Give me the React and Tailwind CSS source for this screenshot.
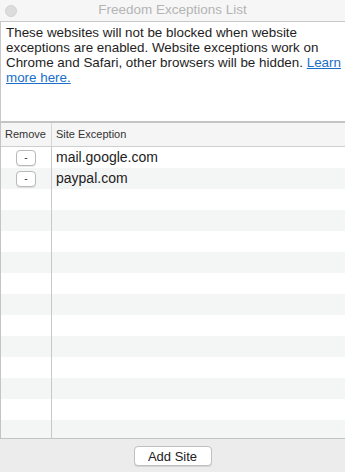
import React from 'react';

const sites = ['mail.google.com', 'paypal.com'];

function App() {
  const rows = Array.from({ length: 14 }, (_, i) => sites[i] || null);

  return (
    <div className="w-[345px] h-[472px] flex flex-col bg-[#ececec] overflow-hidden" style={{ fontFamily: '"Liberation Sans", Arial, sans-serif' }}>
      {/* Title bar */}
      <div className="relative h-[21px] shrink-0 bg-[#f6f6f6] flex items-center justify-center">
        <div className="absolute left-[5px] top-[5px] w-[12px] h-[12px] rounded-full bg-[#dcdcdc] border border-[#d2d2d2]" />
        <span className="text-[13.5px] text-[#b4b4b4]">Freedom Exceptions List</span>
      </div>

      {/* Description */}
      <div className="h-[100px] shrink-0 bg-white border-l border-t border-[#c8c8c8] pl-[5px] pr-0 pt-[3px] text-[13.4px] leading-[15px] text-[#1e1e1e]">
        These websites will not be blocked when website exceptions are enabled. Website exceptions work on Chrome and Safari, other browsers will be hidden.{' '}
        <a href="#" className="text-[#1a6fc9] underline">Learn more here.</a>
      </div>

      {/* Table */}
      <div className="h-[318px] shrink-0 flex flex-col bg-white border-l border-t-2 border-b border-[#c4c4c4] overflow-hidden">
        <div className="h-[24px] shrink-0 flex bg-[#f5f5f5] border-b border-[#cfcfcf] text-[11px] text-[#333]">
          <div className="w-[51px] flex items-center pl-[4px] border-r border-[#d8d8d8]">Remove</div>
          <div className="flex-1 flex items-center pl-[4px]">Site Exception</div>
        </div>
        {rows.map((site, i) => (
          <div key={i} className={`h-[21px] shrink-0 flex ${i % 2 ? 'bg-[#f4f5f5]' : 'bg-white'}`}>
            <div className="w-[51px] flex items-center justify-center border-r border-[#c8c8c8]">
              {site && (
                <button className="w-[20px] h-[16px] rounded-[4px] border border-[#b9b9b9] bg-white text-[10px] leading-none text-[#333] shadow-[0_1px_0_rgba(0,0,0,0.08)]">-</button>
              )}
            </div>
            <div className="flex-1 flex items-center pl-[4px] text-[14px] text-[#222]">{site}</div>
          </div>
        ))}
      </div>

      {/* Bottom bar */}
      <div className="flex-1 flex items-center justify-center">
        <button className="w-[78px] h-[20px] rounded-[4px] border border-[#c0c0c0] bg-white text-[13px] text-[#222] shadow-[0_1px_0_rgba(0,0,0,0.1)]">Add Site</button>
      </div>
    </div>
  );
}

export default App;
